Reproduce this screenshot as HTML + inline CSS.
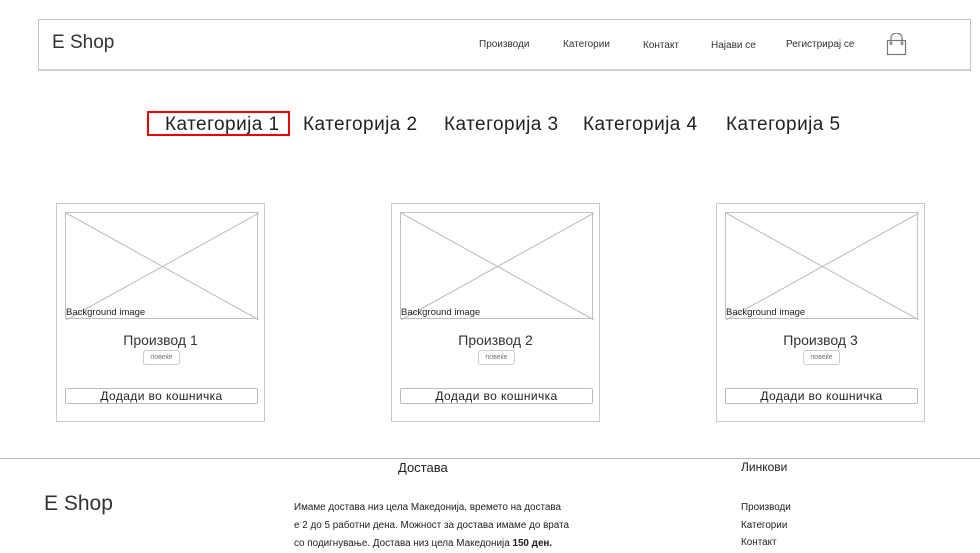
<!DOCTYPE html>
<html><head><meta charset="utf-8"><style>
*{margin:0;padding:0;box-sizing:border-box}
body{width:980px;height:548px;background:#fff;font-family:"Liberation Sans","DejaVu Sans",sans-serif;color:#222;position:relative;overflow:hidden}
.a{position:absolute;white-space:nowrap}
.hdr{left:38px;top:19px;width:933px;height:52px;border:1px solid #c4c4c4;border-bottom:2px solid #d0d0d0}
.nav{font-size:10px;color:#333}
.cat{font-size:19px;letter-spacing:0.45px;color:#222}
.card{width:209px;height:219px;border:1px solid #c8c8c8}
.img{position:absolute;left:8px;top:8px;width:193px;height:107px;border:1px solid #c0c0c0}
.img svg{position:absolute;left:0;top:0}
.bg{position:absolute;left:0;bottom:0;font-size:9.5px;color:#222}
.pn{position:absolute;left:0;width:100%;text-align:center;top:128px;font-size:14px;color:#333}
.pv{position:absolute;left:86px;top:146px;width:37px;height:15px;border:1px solid #ccc;border-radius:3px;font-size:7px;color:#777;text-align:center;line-height:13px}
.add{position:absolute;left:8px;top:184px;width:193px;height:16px;border:1px solid #bbb;border-radius:2px;font-size:12px;letter-spacing:0.4px;text-align:center;line-height:14px;color:#222}
.ft{font-size:9.9px;color:#222}
</style></head><body>
<div class="a hdr"></div>
<div class="a" style="left:52px;top:32px;font-size:19px;color:#333">E Shop</div>
<div class="a nav" style="left:479px;top:39px">Производи</div>
<div class="a nav" style="left:563px;top:39px">Категории</div>
<div class="a nav" style="left:643px;top:40px">Контакт</div>
<div class="a nav" style="left:711px;top:40px">Најави се</div>
<div class="a nav" style="left:786px;top:39px">Регистрирај се</div>
<svg class="a" style="left:886px;top:33px" width="22" height="24" viewBox="0 0 22 24"><rect x="1.5" y="7.5" width="18" height="14" fill="none" stroke="#777" stroke-width="1.2"/><path d="M5 10 V5 a5.5 5 0 0 1 11 0 V10" fill="none" stroke="#777" stroke-width="1.2"/><circle cx="5" cy="10.5" r="1" fill="none" stroke="#777"/><circle cx="16" cy="10.5" r="1" fill="none" stroke="#777"/></svg>

<div class="a" style="left:147px;top:111px;width:143px;height:25px;border:2px solid #e00"></div>
<div class="a cat" style="left:165px;top:114px">Категорија 1</div>
<div class="a cat" style="left:303px;top:114px">Категорија 2</div>
<div class="a cat" style="left:444px;top:114px">Категорија 3</div>
<div class="a cat" style="left:583px;top:114px">Категорија 4</div>
<div class="a cat" style="left:726px;top:114px">Категорија 5</div>

<div class="a card" style="left:56px;top:203px"><div class="img"><svg width="193" height="107"><line x1="0" y1="0" x2="193" y2="107" stroke="#bbb"/><line x1="193" y1="0" x2="0" y2="107" stroke="#bbb"/></svg><span class="bg">Background image</span></div><div class="pn">Производ 1</div><div class="pv">повеќе</div><div class="add">Додади во кошничка</div></div>
<div class="a card" style="left:391px;top:203px"><div class="img"><svg width="193" height="107"><line x1="0" y1="0" x2="193" y2="107" stroke="#bbb"/><line x1="193" y1="0" x2="0" y2="107" stroke="#bbb"/></svg><span class="bg">Background image</span></div><div class="pn">Производ 2</div><div class="pv">повеќе</div><div class="add">Додади во кошничка</div></div>
<div class="a card" style="left:716px;top:203px"><div class="img"><svg width="193" height="107"><line x1="0" y1="0" x2="193" y2="107" stroke="#bbb"/><line x1="193" y1="0" x2="0" y2="107" stroke="#bbb"/></svg><span class="bg">Background image</span></div><div class="pn">Производ 3</div><div class="pv">повеќе</div><div class="add">Додади во кошничка</div></div>

<div class="a" style="left:0;top:458px;width:980px;height:1px;background:#bbb"></div>
<div class="a" style="left:44px;top:492px;font-size:21px;color:#333">E Shop</div>
<div class="a" style="left:398px;top:460px;font-size:13px">Достава</div>
<div class="a ft" style="left:294px;top:499px;line-height:18px">Имаме достава низ цела Македонија, времето на достава<br>е 2 до 5 работни дена. Можност за достава имаме до врата<br>со подигнување. Достава низ цела Македонија <b>150 ден.</b></div>
<div class="a" style="left:741px;top:460px;font-size:12px">Линкови</div>
<div class="a ft" style="left:741px;top:499px;line-height:17.5px">Производи<br>Категории<br>Контакт</div>
</body></html>
